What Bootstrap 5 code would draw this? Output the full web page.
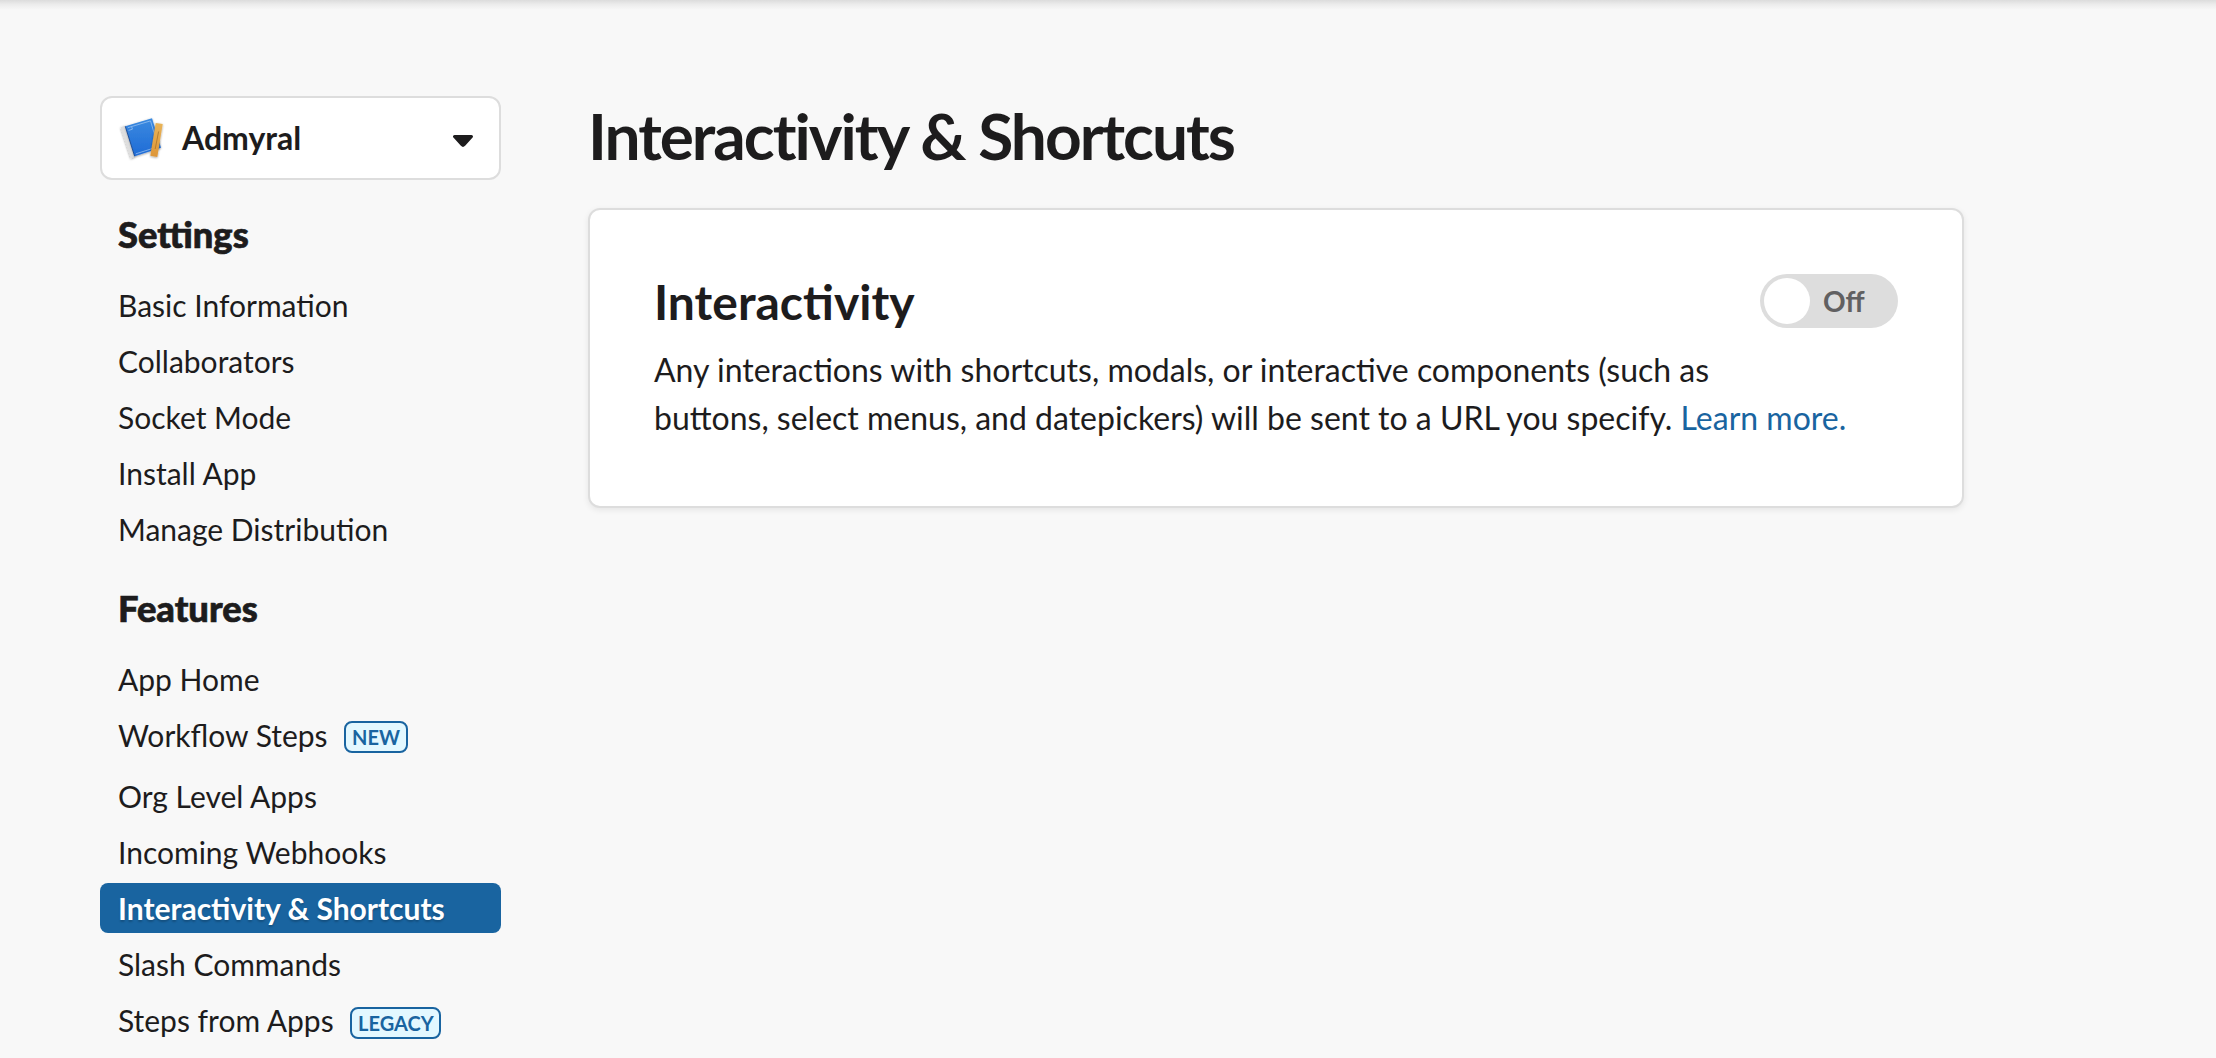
<!DOCTYPE html>
<html lang="en">
<head>
<meta charset="utf-8">
<title>Interactivity &amp; Shortcuts</title>
<link rel="stylesheet" href="https://cdn.jsdelivr.net/npm/bootstrap@5.3.0/dist/css/bootstrap.min.css">
<style>
body{background:#f8f8f8;color:#1d1c1d;font-family:Lato,"Open Sans",sans-serif;height:1058px;overflow:hidden}
.top-shade{height:10px;background:linear-gradient(#dcdcdc,#ececec 45%,#f8f8f8)}
.layout{padding:86px 0 0 100px;gap:87px}
.side{width:401px}
.app-select{height:84px;border:2px solid #ddd;border-radius:12px;background:#fff;padding:0 26px 0 18px;font-size:32px;color:#1d1c1d;line-height:1}
.app-icon{overflow:visible}
.caret{margin-top:6px}
.side-title{font-size:36.3px;font-weight:900;line-height:44px;margin:32px 0 24px 18px;-webkit-text-stroke:.7px #1d1c1d}
.side .nav{gap:6px}
.side .nav-link{font-size:30px;line-height:50px;padding:0 18px;color:#1d1c1d;border-radius:8px;white-space:nowrap}
.side .nav-link.active{background:#1964a0;color:#fff;font-weight:700;text-shadow:0 2px 2px rgba(0,0,0,.2)}
.side .tagged{height:55px}
.tag{font-size:20px;font-weight:700;line-height:28px;height:32px;border:2px solid #1964a0;border-radius:8px;background:#e3f8ff;color:#1964a0;padding:0 6px;margin:11px 0 0 16.4px}
.tag.lower{margin-top:12px;padding-right:5.300px}
.main-col{width:1376px}
h1{font-size:64px;font-weight:700;line-height:80px;letter-spacing:-2px;margin:0 0 32px;white-space:nowrap}
.panel{height:300px;border:2px solid #ddd;border-radius:12px;background:#fff;padding:62px 64px;box-shadow:0 2px 6px rgba(0,0,0,.08)}
h2{font-size:48px;font-weight:700;line-height:60px;margin:0}
.panel p{font-size:32px;line-height:48px;margin:14px 0 0;white-space:nowrap}
.panel a{color:#1964a0;text-decoration:none}
.toggle{width:138px;height:54px;border-radius:27px;background:#ddd;color:#616061;border:0;padding:0 4px;font-size:28px;font-weight:700;margin-top:2px}
.knob{width:46px;height:46px;border-radius:50%;background:#fff;margin-right:13px}
</style>
<script src="https://cdn.jsdelivr.net/npm/bootstrap@5.3.0/dist/js/bootstrap.bundle.min.js"></script>
</head>
<body>
<div class="top-shade"></div>
<div class="layout d-flex align-items-start">
  <aside class="side flex-shrink-0">
    <button type="button" class="app-select d-flex align-items-center w-100">
      <svg class="app-icon me-3" width="46" height="46" viewBox="0 0 46 46">
        <defs>
          <linearGradient id="cover" x1="0" y1="0" x2="0" y2="1"><stop offset="0" stop-color="#3a8ae0"/><stop offset="1" stop-color="#1f6bd6"/></linearGradient>
          <linearGradient id="ruler" x1="0" y1="0" x2="0" y2="1"><stop offset="0" stop-color="#e9b458"/><stop offset="1" stop-color="#dd9538"/></linearGradient>
          <filter id="soft" x="-20%" y="-20%" width="140%" height="140%"><feDropShadow dx="0" dy=".8" stdDeviation=".8" flood-opacity=".4"/></filter>
        </defs>
        <path d="M.5 12.200 5.600 10.500 15.300 41.200 10.800 43.500Z" fill="#dedede" filter="url(#soft)"/>
        <path d="M5.300 11.300 32 3.300 41 32.700 14.700 41.300Z" fill="url(#cover)" filter="url(#soft)"/>
        <path d="M5.300 11.300 14.700 41.300" stroke="#1c4f9c" stroke-width="1" fill="none"/>
        <path d="M7.800 12.700 30.500 5.900 38.200 31.700 15.800 38.800M8.600 15.400l3.800-1.200-.7-2.300" stroke="#a3c9f2" stroke-width=".7" fill="none"/>
        <path d="M35.700 8 42.700 9 37.300 42 30.300 40.700Z" fill="url(#ruler)" filter="url(#soft)"/>
        <path d="M38.600 16.500 35.200 34" stroke="#a8742b" stroke-width=".8"/>
      </svg>
      <span class="fw-bold">Admyral</span>
      <svg class="caret ms-auto" width="20" height="12" viewBox="0 0 20 12"><path d="M1.500 1.500h17L11 9.800q-1 1-2 0z" fill="#1d1c1d" stroke="#1d1c1d" stroke-width="3" stroke-linejoin="round"/></svg>
    </button>
    <h3 class="side-title">Settings</h3>
    <nav class="nav flex-column">
      <a class="nav-link" href="#">Basic Information</a>
      <a class="nav-link" href="#">Collaborators</a>
      <a class="nav-link" href="#">Socket Mode</a>
      <a class="nav-link" href="#">Install App</a>
      <a class="nav-link" href="#">Manage Distribution</a>
    </nav>
    <h3 class="side-title">Features</h3>
    <nav class="nav flex-column">
      <a class="nav-link" href="#">App Home</a>
      <a class="nav-link tagged d-flex align-items-start" href="#">Workflow Steps<span class="tag">NEW</span></a>
      <a class="nav-link" href="#">Org Level Apps</a>
      <a class="nav-link" href="#">Incoming Webhooks</a>
      <a class="nav-link active" href="#">Interactivity &amp; Shortcuts</a>
      <a class="nav-link" href="#">Slash Commands</a>
      <a class="nav-link tagged d-flex align-items-start" href="#">Steps from Apps<span class="tag lower">LEGACY</span></a>
    </nav>
  </aside>
  <main class="main-col">
    <h1>Interactivity &amp; Shortcuts</h1>
    <section class="panel">
      <div class="d-flex justify-content-between align-items-start">
        <h2>Interactivity</h2>
        <button type="button" class="toggle d-flex align-items-center"><span class="knob"></span><span>Off</span></button>
      </div>
      <p>Any interactions with shortcuts, modals, or interactive components (such as<br>buttons, select menus, and datepickers) will be sent to a URL you specify. <a href="#">Learn more.</a></p>
    </section>
  </main>
</div>
</body>
</html>
